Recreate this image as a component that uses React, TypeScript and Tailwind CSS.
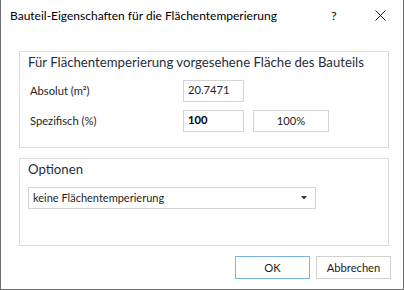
import React from "react";

const font = { fontFamily: 'Lato, "Noto Sans", sans-serif' };

export default function App() {
  return (
    <div
      className="w-[404px] h-[290px] bg-white border-x border-b border-[#707070] flex flex-col text-[#1e1e1e]"
      style={font}
    >
      {/* Title bar */}
      <div className="h-[31px] flex items-center pl-[9px] shrink-0">
        <span className="text-[12px] leading-[16px] text-black">
          Bauteil-Eigenschaften für die Flächentemperierung
        </span>
        <span className="ml-auto text-[12px] leading-[16px] text-black w-[10px] text-center">?</span>
        <svg className="ml-[36px] mr-[17px]" width="11" height="11" viewBox="0 0 11 11">
          <path d="M0.5 0.5 L10.5 10.5 M10.5 0.5 L0.5 10.5" stroke="#111" strokeWidth="1" fill="none" />
        </svg>
      </div>

      <div className="flex flex-col pl-[18px] pt-[20px]">
        {/* Group 1 */}
        <div className="w-[370px] h-[97px] border border-[#dcdcdc] pl-[8px] flex flex-col">
          <div className="text-[13.2px] leading-[20px] text-[#1f2d3a] whitespace-nowrap">
            Für Flächentemperierung vorgesehene Fläche des Bauteils
          </div>
          <div className="flex items-center mt-[8px] ml-[2px]">
            <span className="w-[153px] text-[11.2px] leading-[16px]">Absolut (m²)</span>
            <div className="w-[61px] h-[22px] border border-[#d4d4d4] pl-[4px] pt-[1px] text-[11.2px] leading-[16px]">
              20.7471
            </div>
          </div>
          <div className="flex items-center mt-[8px] ml-[2px]">
            <span className="w-[153px] text-[11.2px] leading-[16px]">Spezifisch (%)</span>
            <div className="w-[61px] h-[22px] border border-[#d4d4d4] pl-[4px] pt-[1px] text-[11.2px] leading-[16px] font-bold text-black">
              100
            </div>
            <div className="ml-[9px] w-[76px] h-[22px] border border-[#d4d4d4] flex items-center justify-center text-[11.2px] leading-[16px]">
              100%
            </div>
          </div>
        </div>

        {/* Group 2 */}
        <div className="mt-[10px] w-[370px] h-[88px] border border-[#dcdcdc] pl-[8px] flex flex-col">
          <div className="text-[13.2px] leading-[20px] text-[#1f2d3a]">Optionen</div>
          <div className="mt-[8px] w-[288px] h-[22px] border border-[#d4d4d4] flex items-center pl-[4px] pr-[8px]">
            <span className="text-[11px] leading-[16px]">keine Flächentemperierung</span>
            <svg className="ml-auto" width="6" height="4" viewBox="0 0 6 4">
              <path d="M0 0 L6 0 L3 3.5 Z" fill="#333" />
            </svg>
          </div>
        </div>

        {/* Buttons */}
        <div className="mt-[10px] flex gap-[6px] pl-[216px]">
          <div className="w-[75px] h-[23px] border border-[#7ab4e6] flex items-center justify-center text-[11.2px] leading-[16px]">
            OK
          </div>
          <div className="w-[75px] h-[23px] border border-[#d0d0d0] flex items-center justify-center text-[11.2px] leading-[16px]">
            Abbrechen
          </div>
        </div>
      </div>
    </div>
  );
}
